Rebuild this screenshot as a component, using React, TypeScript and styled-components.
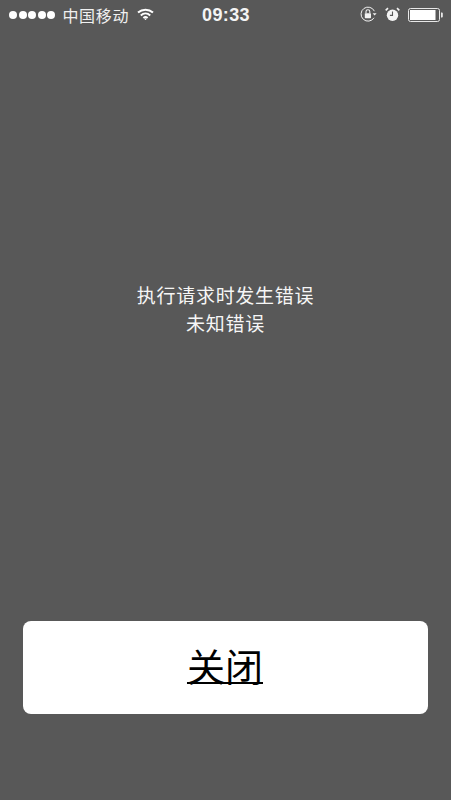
import React from 'react';
import styled, { createGlobalStyle } from 'styled-components';

const GlobalStyle = createGlobalStyle`
  html, body {
    margin: 0;
    padding: 0;
    background: #585858;
  }
`;

const Screen = styled.div`
  width: 451px;
  height: 800px;
  box-sizing: border-box;
  display: flex;
  flex-direction: column;
  background: #585858;
  color: #fff;
  font-family: "Noto Sans CJK SC", "Liberation Sans", sans-serif;
  overflow: hidden;
`;

const StatusBar = styled.div`
  height: 29px;
  flex: none;
  display: grid;
  grid-template-columns: 1fr auto 1fr;
  align-items: center;
  padding: 0 8px 0 9px;
`;

const StatusLeft = styled.div`
  display: flex;
  align-items: center;
`;

const StatusRight = styled.div`
  display: flex;
  align-items: center;
  justify-content: flex-end;
`;

const Signal = styled.div`
  display: flex;
  gap: 1.6px;
  margin-right: 7px;
`;

const Dot = styled.span`
  width: 8px;
  height: 8px;
  border-radius: 50%;
  background: #fff;
`;

const Carrier = styled.span`
  font-size: 16px;
  line-height: 20px;
  letter-spacing: 0.7px;
  color: #f0f0f0;
  margin-right: 8px;
`;

const Clock = styled.span`
  font-family: "Liberation Sans", sans-serif;
  font-size: 18px;
  font-weight: 700;
  letter-spacing: 0.4px;
  color: #f4f4f4;
  margin-top: 1px;
`;

const Message = styled.div`
  flex: none;
  margin-top: 252px;
  text-align: center;
  font-size: 19px;
  line-height: 28px;
  letter-spacing: 0.7px;
  color: #f6f6f6;
`;

const CloseButton = styled.button`
  display: block;
  width: 405px;
  height: 93px;
  margin: 284px 0 0 23px;
  flex: none;
  padding: 0 1px 6px 0;
  border: 0;
  border-radius: 8px;
  background: #fff;
  color: #000;
  font-family: "Noto Sans CJK SC", "Liberation Sans", sans-serif;
  font-size: 38px;
  line-height: 87px;
  text-decoration: underline;
  text-decoration-thickness: 1.5px;
  text-underline-offset: 1px;
`;

const WifiIcon = () => (
  <svg width="17" height="13" viewBox="0 0 17 13" fill="none" stroke="#fff" strokeWidth="2">
    <path d="M1 4.6C5.3 .8 11.7 .8 16 4.6" />
    <path d="M3.8 7.4C6.5 5 10.5 5 13.2 7.4" />
    <path d="M6.4 10C7.6 9 9.4 9 10.6 10" />
    <circle cx="8.5" cy="11.3" r="0.8" fill="#fff" stroke="none" />
  </svg>
);

const RotationLockIcon = () => (
  <svg width="17" height="17" viewBox="0 0 17 17" fill="none">
    <path d="M14 11.8A7 7 0 1 1 14.4 5.2" stroke="#f2f2f2" strokeWidth="1" />
    <path d="M12.6 7.2h4l-2 2.4z" fill="#f2f2f2" />
    <rect x="4.8" y="7.2" width="6.2" height="5" rx="0.6" fill="#f2f2f2" />
    <path d="M6 7.2V5.6a1.9 1.9 0 0 1 3.8 0v1.6" stroke="#f2f2f2" strokeWidth="1.1" />
  </svg>
);

const AlarmIcon = () => (
  <svg width="15" height="15" viewBox="0 0 15 15" fill="none">
    <circle cx="7.5" cy="8.2" r="5.7" fill="#f4f4f4" />
    <path d="M7.5 4.4v4h-2.6" stroke="#585858" strokeWidth="1.1" />
    <path d="M.7 3.4 3 1.2M14.3 3.4 12 1.2" stroke="#f4f4f4" strokeWidth="1.6" />
  </svg>
);

const BatteryIcon = () => (
  <svg width="35" height="14" viewBox="0 0 35 14">
    <rect x="0.5" y="0.5" width="31" height="13" rx="2" fill="none" stroke="#e8e8e8" strokeWidth="1" />
    <rect x="2" y="2" width="25.5" height="10" fill="#fff" />
    <path d="M33 4.5h.8a1 1 0 0 1 1 1v3a1 1 0 0 1-1 1H33z" fill="#e8e8e8" />
  </svg>
);

const RotationSlot = styled.span`
  display: flex;
  margin-right: 8px;
`;

const AlarmSlot = styled.span`
  display: flex;
  margin-right: 8px;
`;

export default function App() {
  return (
    <>
      <GlobalStyle />
      <Screen>
        <StatusBar>
          <StatusLeft>
            <Signal>
              {[0, 1, 2, 3, 4].map((i) => <Dot key={i} />)}
            </Signal>
            <Carrier>中国移动</Carrier>
            <WifiIcon />
          </StatusLeft>
          <Clock>09:33</Clock>
          <StatusRight>
            <RotationSlot><RotationLockIcon /></RotationSlot>
            <AlarmSlot><AlarmIcon /></AlarmSlot>
            <BatteryIcon />
          </StatusRight>
        </StatusBar>
        <Message>
          <div>执行请求时发生错误</div>
          <div>未知错误</div>
        </Message>
        <CloseButton>关闭</CloseButton>
      </Screen>
    </>
  );
}
